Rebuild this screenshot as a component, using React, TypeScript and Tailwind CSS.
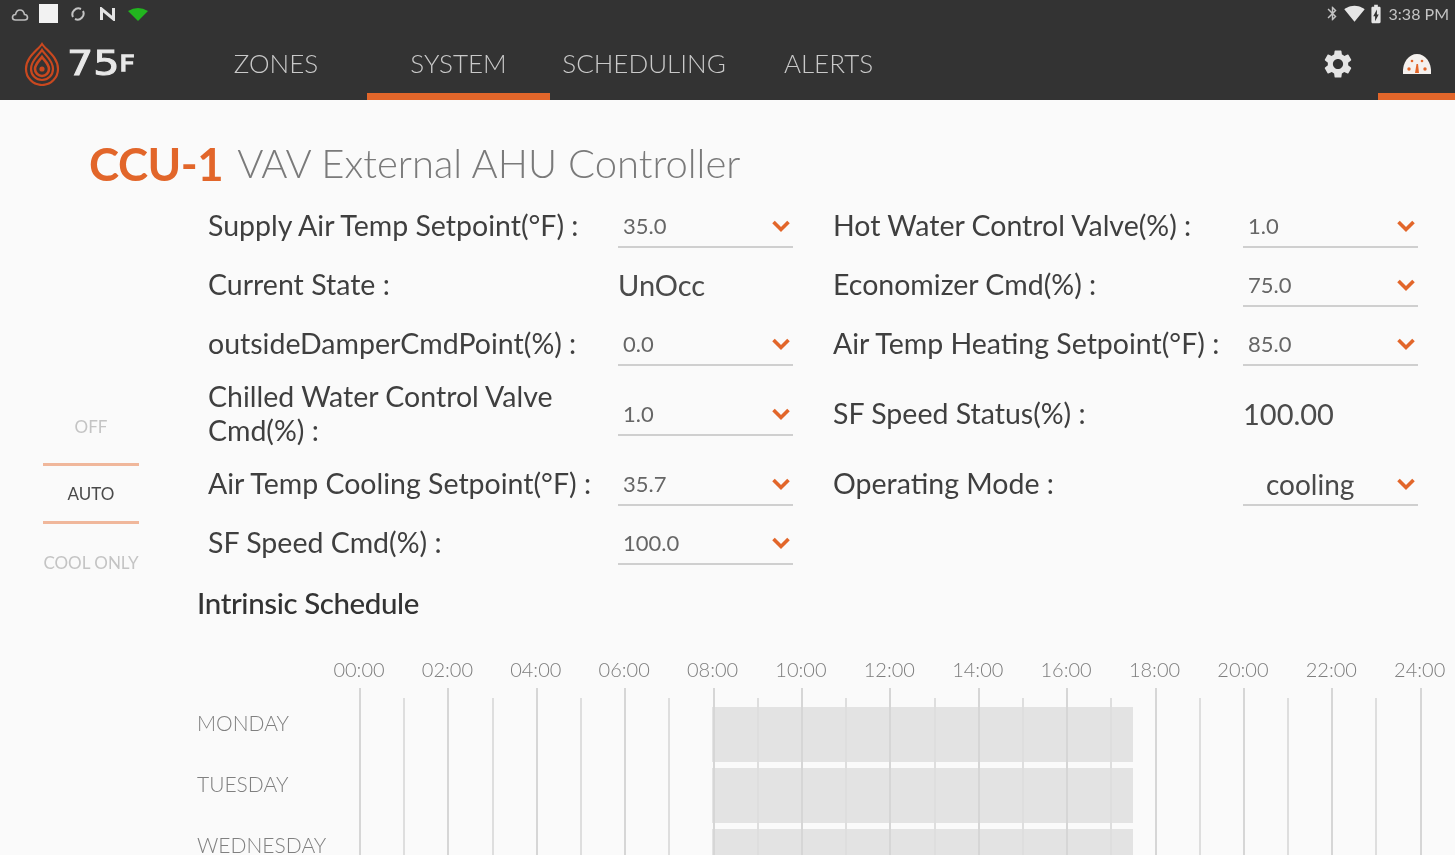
import React from "react";
import { MdBatteryChargingFull, MdBluetooth, MdSettings, MdSignalWifi4Bar } from "react-icons/md";

const ORANGE = "#e2662a";

function Chevron() {
  return (
    <svg width="20" height="14" viewBox="0 0 20 14" fill="none">
      <path d="M2.500 3l7.500 7.500L17.500 3" stroke={ORANGE} strokeWidth="3.600" />
    </svg>
  );
}

function Picker({ value, big }: { value: string; big?: boolean }) {
  return (
    <div className="mt-[2px] flex h-[43px] w-[175px] items-center justify-between border-b-2 border-[#cfcfcf] pr-[2px]">
      <span
        className={
          big
            ? "pl-[23px] text-[28px] text-[#4a4a4a]"
            : "pl-[5px] text-[22px] text-[#666666]"
        }
      >
        {value}
      </span>
      <Chevron />
    </div>
  );
}

function Label({ children }: { children: React.ReactNode }) {
  return <div className="whitespace-nowrap pb-[2px] text-[28.500px] leading-[34px] text-[#3f3f3f]">{children}</div>;
}

function Plain({ children }: { children: React.ReactNode }) {
  return <div className="text-[29px] text-[#4b4b4b]">{children}</div>;
}

function Logo() {
  return (
    <svg width="38" height="44" viewBox="0 0 38 44" fill="none" stroke="#c9481f" strokeWidth="2.200">
      <path d="M19 2C15 8 3 15 3 27a16 16 0 0 0 32 0C35 15 23 8 19 2z" />
      <path d="M19 8c-3 5-11 10-11 19a11 11 0 0 0 22 0c0-9-8-14-11-19z" />
      <path d="M19 15c-2 3-7 7-7 12a7 7 0 0 0 14 0c0-5-5-9-7-12z" strokeWidth="2.600" />
      <circle cx="19" cy="27" r="2.600" fill="#c9481f" stroke="none" />
    </svg>
  );
}

function Gauge() {
  return (
    <svg width="30" height="24" viewBox="0 0 30 24">
      <path d="M1 22C0 10 7 2 15 2s15 8 14 20z" fill="#f5f1ee" />
      <path d="M13 21l1.500-9h1.500l1 9z" fill={ORANGE} />
      <circle cx="7" cy="17" r="1.700" fill={ORANGE} />
      <circle cx="23" cy="17" r="1.700" fill={ORANGE} />
      <circle cx="10" cy="9" r="1.300" fill={ORANGE} />
      <circle cx="20" cy="9" r="1.300" fill={ORANGE} />
    </svg>
  );
}

function StatusBar() {
  return (
    <div className="flex h-[27px] items-center justify-between pl-[11px] pr-[6px]">
      <div className="flex items-center">
        <svg width="18" height="14" viewBox="0 0 18 14" fill="none" stroke="#bdbdbd" strokeWidth="1.600">
          <path d="M1.500 10.500c0-2 1.500-3 3-3 .5-2.500 2.500-4.500 4.500-4.500s4 2 4.500 4.500c1.500 0 3 1 3 3s-1 2.500-3 2.500h-9c-2 0-3-.5-3-2.500z" />
        </svg>
        <div className="ml-[10px] h-[19px] w-[19px] bg-[#f2f2f2]" />
        <svg className="ml-[12px]" width="16" height="16" viewBox="0 0 16 16" fill="none" stroke="#c4c4c4" strokeWidth="2">
          <path d="M3 11A6 6 0 0 1 11 3M13 5A6 6 0 0 1 5 13" />
        </svg>
        <svg className="ml-[13px]" width="17" height="14" viewBox="0 0 17 14" fill="none" stroke="#e4e4e4" strokeWidth="3">
          <path d="M2.500 13V2l12 10V1" />
        </svg>
        <svg className="ml-[12px]" width="20" height="14" viewBox="0 0 20 14">
          <path d="M0 4Q10-2 20 4L10 14z" fill="#22b51f" />
        </svg>
      </div>
      <div className="flex items-center text-[#c4c4c4]">
        <MdBluetooth size={17} />
        <MdSignalWifi4Bar size={21} className="ml-[3px] text-[#e6e6e6]" />
        <MdBatteryChargingFull size={22} className="text-[#e6e6e6]" />
        <span className="ml-[2px] text-[16px]">3:38 PM</span>
      </div>
    </div>
  );
}

function NavBar() {
  const tabClass =
    "flex h-full items-center justify-center text-[26px] font-light text-[#c9c9c9]";
  return (
    <div className="flex h-[73px]">
      <div className="flex w-[185px] items-center pl-[23px]">
        <Logo />
        <span className="ml-[6px] inline-block origin-left scale-x-[1.250] whitespace-nowrap text-[33px] leading-none text-[#e8e8e8] [-webkit-text-stroke:1px_#e8e8e8] [font-family:'DejaVu_Sans',sans-serif]">
          75<span className="relative top-[-4px] text-[21px] [-webkit-text-stroke:1.400px_#e8e8e8]">F</span>
        </span>
      </div>
      <div className={`${tabClass} w-[182px] pb-[1px]`}>ZONES</div>
      <div className={`${tabClass} w-[183px] border-b-[7px] border-[#e2662a] pt-[6px]`}>SYSTEM</div>
      <div className={`${tabClass} w-[188px] pb-[1px]`}>SCHEDULING</div>
      <div className={`${tabClass} w-[181px] pb-[1px]`}>ALERTS</div>
      <div className="flex-1" />
      <div className="flex w-[80px] items-center justify-center text-[#e4e4e4]">
        <MdSettings size={34} />
      </div>
      <div className="flex w-[77px] items-center justify-center border-b-[7px] border-[#e2662a] pt-[7px]">
        <Gauge />
      </div>
    </div>
  );
}

function Modes() {
  return (
    <div className="ml-[43px] mt-[208px] flex w-[96px] flex-col items-center text-[17px]">
      <div className="flex h-[62px] w-full items-center justify-center border-b-[3px] border-[#f0b79b] pb-[14px] text-[#c4c4c4]">
        OFF
      </div>
      <div className="flex h-[58px] w-full items-center justify-center border-b-[3px] border-[#f0b79b] text-[#4a4a4a]">
        AUTO
      </div>
      <div className="flex h-[78px] w-full items-center justify-center whitespace-nowrap text-[#c4c4c4]">
        COOL ONLY
      </div>
    </div>
  );
}

function Settings() {
  return (
    <div className="ml-[11px] grid grid-cols-[370px_175px_370px_175px] grid-rows-[59px_59px_59px_81px_59px_59px] items-center gap-x-[40px]">
      <Label>Supply Air Temp Setpoint(°F) :</Label>
      <Picker value="35.0" />
      <Label>Hot Water Control Valve(%) :</Label>
      <Picker value="1.0" />

      <Label>Current State :</Label>
      <Plain>UnOcc</Plain>
      <Label>Economizer Cmd(%) :</Label>
      <Picker value="75.0" />

      <Label>outsideDamperCmdPoint(%) :</Label>
      <Picker value="0.0" />
      <Label>Air Temp Heating Setpoint(°F) :</Label>
      <Picker value="85.0" />

      <Label>
        Chilled Water Control Valve
        <br />
        Cmd(%) :
      </Label>
      <Picker value="1.0" />
      <Label>SF Speed Status(%) :</Label>
      <Plain>100.00</Plain>

      <Label>Air Temp Cooling Setpoint(°F) :</Label>
      <Picker value="35.7" />
      <Label>Operating Mode :</Label>
      <Picker value="cooling" big />

      <Label>SF Speed Cmd(%) :</Label>
      <Picker value="100.0" />
    </div>
  );
}

const HOURS = ["00:00", "02:00", "04:00", "06:00", "08:00", "10:00", "12:00", "14:00", "16:00", "18:00", "20:00", "22:00", "24:00"];
const DAYS = ["MONDAY", "TUESDAY", "WEDNESDAY"];

function Schedule() {
  return (
    <div className="ml-[197px]">
      <div className="mt-[-17px] text-[29.500px] font-medium leading-[36px] tracking-[-0.4px] text-[#333333]">
        Intrinsic Schedule
      </div>
      <div className="ml-[162px] mt-[34px] flex h-[33px] w-[1060px]">
        {HOURS.map((h) => (
          <div key={h} className="flex w-[88.400px] shrink-0 -translate-x-[44.200px] justify-center text-[20px] font-light leading-[28px] text-[#7d7d7d]">
            {h}
          </div>
        ))}
      </div>
      <div className="flex">
        <div className="w-[162px] pt-[19px]">
          {DAYS.map((d) => (
            <div key={d} className="flex h-[61px] items-center pb-[29px] text-[21px] font-light text-[#808080]">
              {d}
            </div>
          ))}
        </div>
        <div className="relative h-[170px] w-[1060px]">
          <div className="pt-[19px]">
            {DAYS.map((d) => (
              <div key={d} className="mb-[6px] ml-[353px] h-[55px] w-[421px] bg-[#e3e3e3]" />
            ))}
          </div>
          <div className="absolute inset-0 flex">
            {HOURS.slice(0, 12).map((h) => (
              <div key={h} className="flex h-full w-[88.400px] shrink-0">
                <div className="h-full w-[44.200px] border-l-2 border-[#d6d6d6]" />
                <div className="mt-[10px] h-full w-[44.200px] border-l-2 border-[#dedede]" />
              </div>
            ))}
            <div className="h-full border-l-2 border-[#d6d6d6]" />
          </div>
        </div>
      </div>
    </div>
  );
}

export default function App() {
  return (
    <div className="h-[855px] w-[1455px] overflow-hidden bg-[#fafafa] blur-[0.5px] [font-family:Lato,'Noto_Sans',sans-serif]">
      <div className="h-[100px] bg-[#333333]">
        <StatusBar />
        <NavBar />
      </div>
      <div className="flex h-[96px] items-baseline pl-[89px] pt-[35px]">
        <span className="text-[45.500px] font-bold leading-[58px] tracking-[-0.5px] text-[#e2662a]">CCU-1</span>
        <span className="relative top-[-3px] ml-[14px] text-[40px] font-light text-[#7a7a7a]">VAV External AHU Controller</span>
      </div>
      <div className="flex">
        <div className="w-[197px] shrink-0">
          <Modes />
        </div>
        <Settings />
      </div>
      <Schedule />
    </div>
  );
}
